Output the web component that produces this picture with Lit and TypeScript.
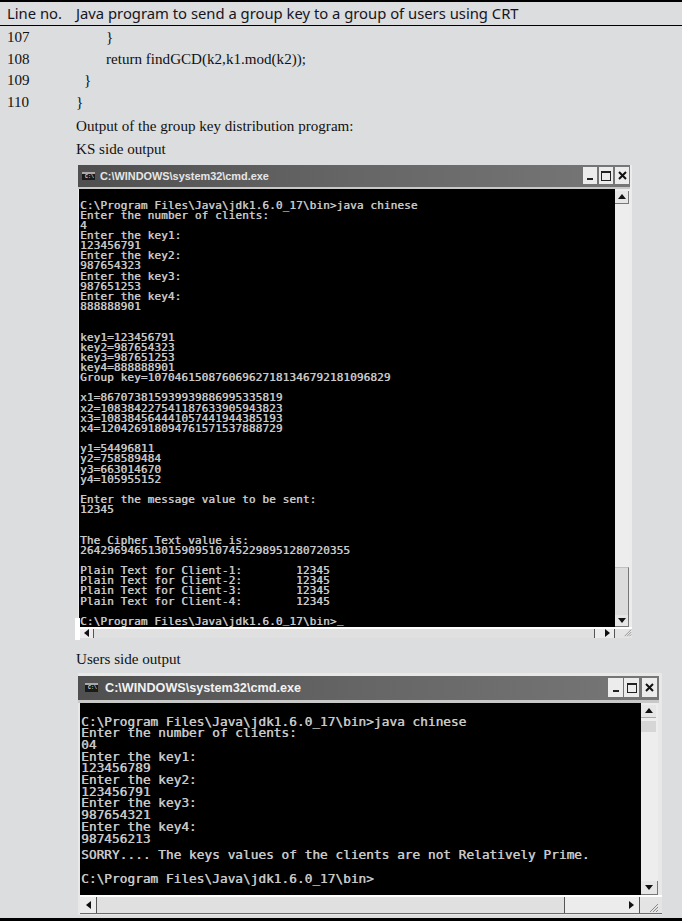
import { LitElement, html, css } from "lit";
import { customElement, property } from "lit/decorators.js";

const KS = `C:\\Program Files\\Java\\jdk1.6.0_17\\bin>java chinese
Enter the number of clients:
4
Enter the key1:
123456791
Enter the key2:
987654323
Enter the key3:
987651253
Enter the key4:
888888901


key1=123456791
key2=987654323
key3=987651253
key4=888888901
Group key=107046150876069627181346792181096829

x1=867073815939939886995335819
x2=108384227541187633905943823
x3=108384564441057441944385193
x4=120426918094761571537888729

y1=54496811
y2=758589484
y3=663014670
y4=105955152

Enter the message value to be sent:
12345


The Cipher Text value is:
2642969465130159095107452298951280720355

Plain Text for Client-1:        12345
Plain Text for Client-2:        12345
Plain Text for Client-3:        12345
Plain Text for Client-4:        12345

C:\\Program Files\\Java\\jdk1.6.0`;

const USERS_TOP = `C:\\Program Files\\Java\\jdk1.6.0_17\\bin>java chinese
Enter the number of clients:
04
Enter the key1:
123456789
Enter the key2:
123456791
Enter the key3:
987654321
Enter the key4:
987456213`;
const USERS_BOTTOM = `SORRY.... The keys values of the clients are not Relatively Prime.

C:\\Program Files\\Java\\jdk1.6.0_17\\bin>`;

@customElement("cmd-window")
class CmdWindow extends LitElement {
  @property({ type: Boolean }) big = false;
  static styles = css`
    :host { display: block; position: relative; }
    .patch { position: absolute; left: -3px; top: 453px; width: 5px; height: 22px; background: #fff; }
    .win { display: flex; flex-direction: column; height: 100%; background: #ececec; box-sizing: border-box; }
    .win.big { padding-top: 3px; background: #e8e8e8; }
    .title { flex: none; display: flex; align-items: center; background: linear-gradient(90deg, #4f4f4f 0%, #666 50%, #777 100%); color: #e6e6e6; font: 700 10.9px "Liberation Sans", sans-serif; padding: 0 1px 0 4px; margin-right: 2px; border-bottom: 2px solid #c8c8c8; height: 24px; box-sizing: border-box; }
    .big .title { height: 27px; font-size: 12.65px; padding: 0 2px 0 7px; margin-right: 3px; border-bottom-width: 3px; color: #f2f2f2; }
    .ico { width: 13px; height: 8px; background: #1a1a1a; border-top: 2px solid #aaa; box-sizing: border-box; margin-right: 5px; color: #ddd; font: 700 5px/6px "Liberation Mono", monospace; overflow: hidden; white-space: pre; }
    .big .ico { height: 9px; margin-right: 7px; line-height: 7px; }
    .name { flex: 1; }
    .btns { display: flex; gap: 2px; }
    .big .btns { gap: 1px; }
    .btn { width: 14px; height: 17px; background: #ececec; display: flex; align-items: center; justify-content: center; }
    .big .btn { width: 15px; height: 19px; }
    .big .btn:last-child { margin-left: 2px; }
    .btn svg { display: block; }
    .mid { flex: 1; display: flex; min-height: 0; padding-left: 1px; }
    .big .mid { padding-left: 2px; }
    .con { flex: 1; background: #000; color: #c9c9c9; font: 400 11px/10.15px "DejaVu Sans Mono", monospace; letter-spacing: 0.13px; text-shadow: 0.5px 0 0 #b8b8b8; white-space: pre; overflow: hidden; padding: 12px 0 0 1px; box-sizing: border-box; }
    .big .con { font-size: 12.8px; line-height: 11.7px; padding-top: 13px; padding-left: 1px; letter-spacing: 0px; }
    .vs { flex: none; width: 14px; margin-right: 3px; box-sizing: border-box; background: #ededed; display: flex; flex-direction: column; }
    .big .vs { width: 17px; margin-right: 4px; }
    .track { flex: 1; }
    .thumb { flex: none; height: 48px; background: #dcdcdc; border-right: 1px solid #777; border-top: 1px solid #c0c0c0; box-sizing: border-box; }
    .big .thumb { height: 11px; margin: 3px 2px 0 0; background: #d6d6d6; border-right: 0; border-top: 0; }
    .sb { flex: none; height: 12px; background: #e6e6e6; display: flex; align-items: center; justify-content: center; border-right: 1px solid #777; border-bottom: 1px solid #777; box-sizing: border-box; }
    .sb.up { height: 13px; margin-top: 2px; }
    .big .sb { height: 14px; }
    .big .sb.up { height: 13px; margin-top: 2px; border-right: 0; margin-right: 2px; border-bottom-color: #aaa; }
    .hs { flex: none; display: flex; height: 9px; margin-left: 1px; background: #e2e2e2; border-top: 2px solid #fff; }
    .big .hs { height: 16px; margin-left: 2px; margin-bottom: 2px; box-shadow: 0 1px 0 #6a6a6a; }
    .ar { flex: none; width: 15px; display: flex; align-items: center; justify-content: center; background: #ececec; box-sizing: border-box; border-right: 1px solid #555; }
    .big .ar { width: 17px; }
    .ar svg { display: block; }
    .hthumb { flex: 1; background: #e0e0e0; border-right: 1px solid #555; }
    .gapw { flex: none; width: 5px; background: #ececec; }
    .big .gapw { width: 58px; }
    .corner { flex: none; width: 17px; display: flex; align-items: flex-end; justify-content: flex-start; background: #e4e4e4; }
    .big .corner { width: 22px; }
    .corner svg { display: block; margin-left: 8px; }
  `;
  render() {
    return html`<div class="win ${this.big ? "big" : ""}">
      <div class="title">
        <span class="ico"> C:\\</span>
        <span class="name">C:\\WINDOWS\\system32\\cmd.exe</span>
        <div class="btns">
          <div class="btn"><svg width="8" height="8" viewBox="0 0 8 8"><rect x="1" y="6" width="6" height="2" fill="#222"/></svg></div>
          <div class="btn"><svg width="10" height="10" viewBox="0 0 10 10"><rect x="0.5" y="0.5" width="9" height="9" fill="none" stroke="#222" stroke-width="1"/><rect x="0" y="0" width="10" height="2" fill="#222"/></svg></div>
          <div class="btn"><svg width="9" height="9" viewBox="0 0 9 9"><path d="M1 1L8 8M8 1L1 8" stroke="#111" stroke-width="2"/></svg></div>
        </div>
      </div>
      <div class="mid">
        <div class="con"><slot></slot></div>
        <div class="vs">
          <div class="sb up"><svg width="8" height="5" viewBox="0 0 8 5"><path d="M4 0L8 5H0Z" fill="#111"/></svg></div>
          ${this.big ? html`<div class="thumb"></div>` : ""}
          <div class="track"></div>
          ${this.big ? "" : html`<div class="thumb"></div>`}
          <div class="sb"><svg width="8" height="5" viewBox="0 0 8 5"><path d="M0 0H8L4 5Z" fill="#111"/></svg></div>
        </div>
      </div>
      <div class="hs">
        <div class="ar"><svg width="5" height="8" viewBox="0 0 5 8"><path d="M5 0V8L0 4Z" fill="#111"/></svg></div>
        <div class="hthumb"></div>
        <div class="gapw"></div>
        <div class="ar"><svg width="5" height="8" viewBox="0 0 5 8"><path d="M0 0V8L5 4Z" fill="#111"/></svg></div>
        <div class="corner"><svg width="11" height="11" viewBox="0 0 11 11"><path d="M10 2L2 10M10 5L5 10M10 8L8 10" stroke="#888" stroke-width="1"/></svg></div>
      </div>
      ${this.big ? "" : html`<div class="patch"></div>`}
    </div>`;
  }
}

@customElement("app-root")
class AppRoot extends LitElement {
  static styles = css`
    :host { display: block; width: 682px; height: 921px; overflow: hidden; background: #dcddde; color: #111; }
    .page { height: 921px; box-sizing: border-box; display: flex; flex-direction: column; border-top: 2px solid #000; border-bottom: 3px solid #000; }
    .head { flex: none; height: 24px; box-sizing: border-box; display: grid; grid-template-columns: 76px 1fr; align-items: center; border-bottom: 1px solid #000; font: 14.8px "Noto Sans", sans-serif; color: #15151f; padding-bottom: 1px; }
    .head .no { padding-left: 7px; }
    .body { font: 15.1px/21.5px "Liberation Serif", serif; padding-top: 1px; flex: 1; display: flex; flex-direction: column; min-height: 0; }
    .row { display: grid; grid-template-columns: 76px 1fr; height: 21.5px; }
    .row .no { padding-left: 7px; }
    .i1 { padding-left: 30px; }
    .i2 { padding-left: 30px; }
    .i3 { padding-left: 8px; }
    .txt { margin-left: 76px; }
    .out { margin-top: 3px; height: 23px; }
    .w1 { margin: 4px 0 0 78px; width: 554px; height: 473px; flex: none; }
    .w2 { margin: 0 0 0 78px; width: 584px; height: 242px; flex: none; }
    .users { margin-top: 11px; height: 24px; }
    .sorry { margin-top: 5px; display: block; }
    .us { vertical-align: 2px; line-height: 0; }
  `;
  render() {
    return html`<div class="page">
      <div class="head"><div class="no">Line no.</div><div>Java program to send a group key to a group of users using CRT</div></div>
      <div class="body">
        <div class="row"><div class="no">107</div><div class="i1">}</div></div>
        <div class="row"><div class="no">108</div><div class="i2">return findGCD(k2,k1.mod(k2));</div></div>
        <div class="row"><div class="no">109</div><div class="i3">}</div></div>
        <div class="row"><div class="no">110</div><div>}</div></div>
        <div class="txt out">Output of the group key distribution program:</div>
        <div class="txt">KS side output</div>
        <cmd-window class="w1">${KS}<span class="us">_</span>17\\bin><span class="us">_</span></cmd-window>
        <div class="txt users">Users side output</div>
        <cmd-window class="w2" big>${USERS_TOP}<span class="sorry">${USERS_BOTTOM}</span></cmd-window>
      </div>
    </div>`;
  }
}
